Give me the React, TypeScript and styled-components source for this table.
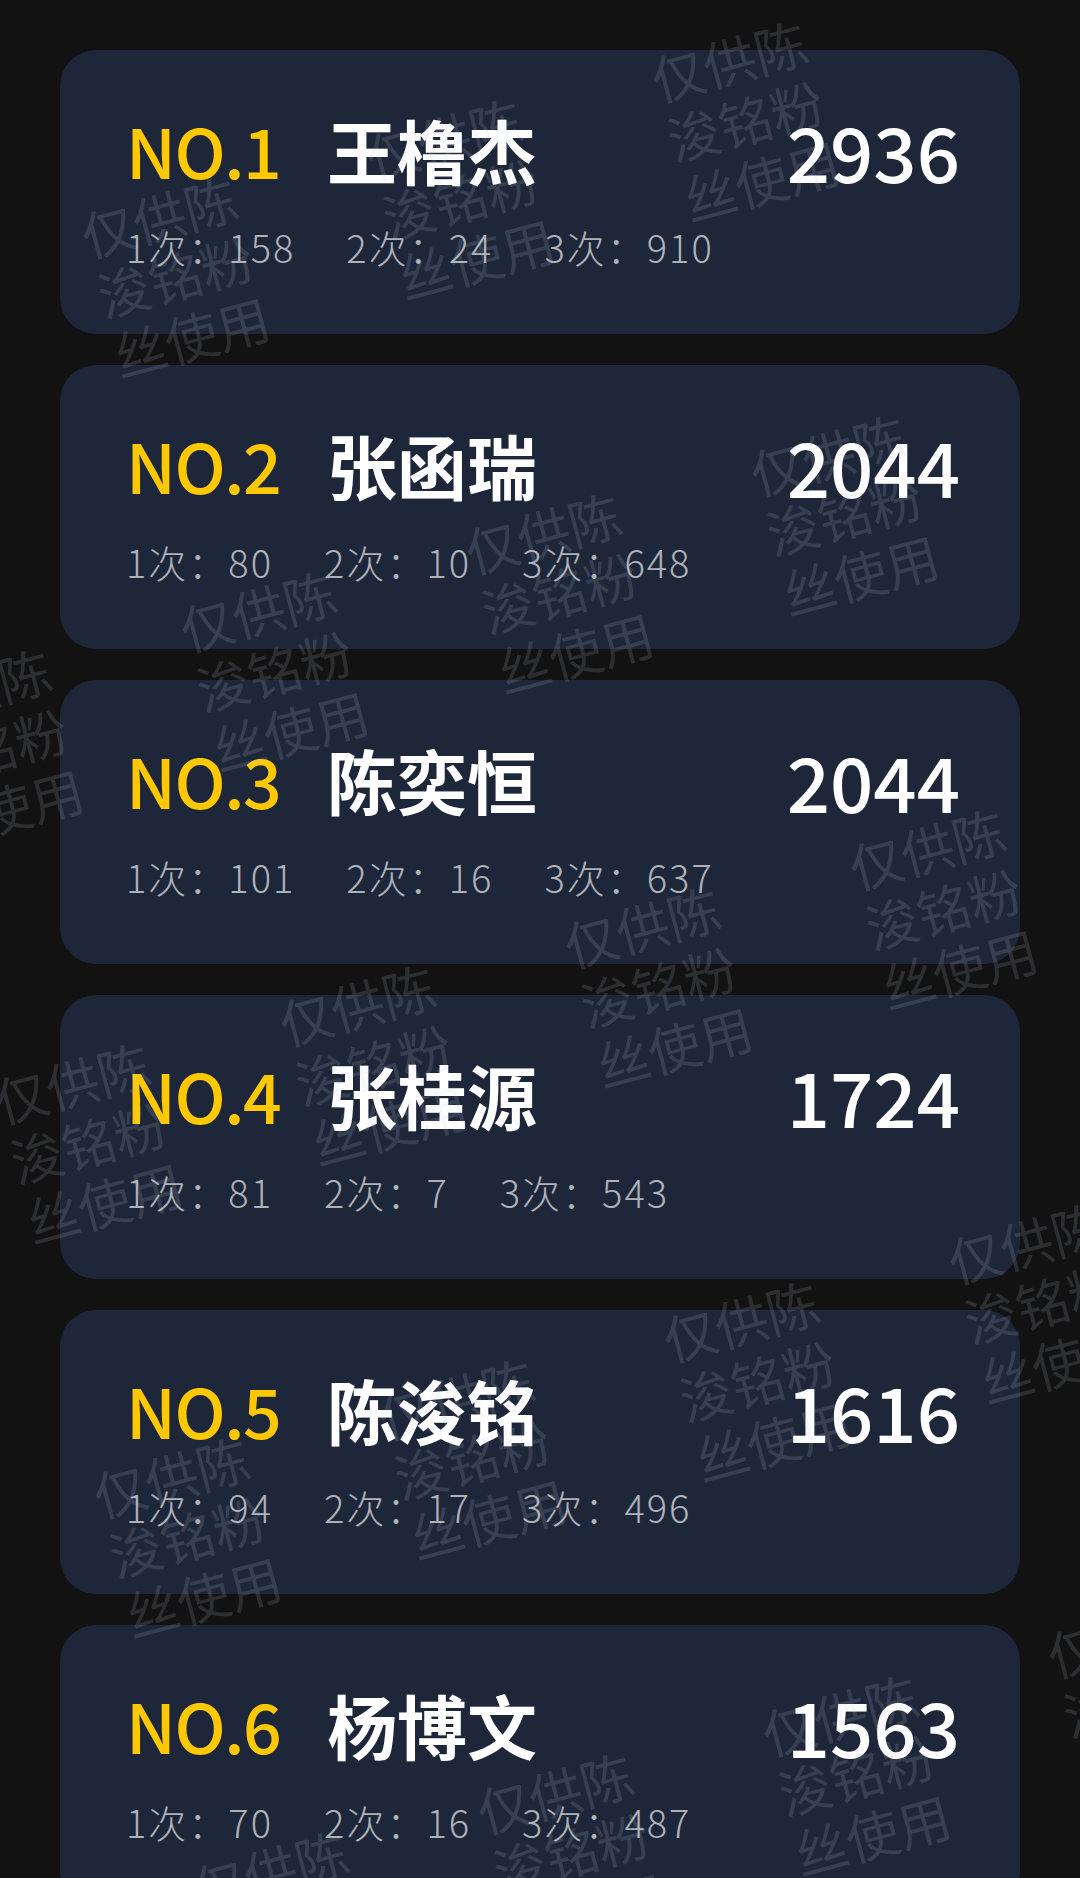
import styled, { createGlobalStyle } from 'styled-components'

const GlobalStyle = createGlobalStyle`
  html, body {
    margin: 0;
    padding: 0;
    background: #121212;
    overflow: hidden;
  }
  body {
    font-family: 'Noto Sans CJK SC', 'Noto Sans', sans-serif;
  }
`

const Page = styled.div`
  position: relative;
  min-height: 1878px;
  padding: 50px 60px 0;
  box-sizing: border-box;
  display: flex;
  flex-direction: column;
  gap: 31px;
`

const Card = styled.div`
  height: 284px;
  box-sizing: border-box;
  background: #1e2739;
  border-radius: 36px;
  padding: 60px 60px 0 66px;
  display: flex;
  flex-direction: column;
`

const TopRow = styled.div`
  display: flex;
  align-items: center;
  height: 80px;
`

const Rank = styled.span`
  width: 201px;
  flex-shrink: 0;
  color: #ffc800;
  font-size: 68px;
  font-weight: 500;
  letter-spacing: -1.5px;
  line-height: 1;
`

const Name = styled.span`
  color: #ffffff;
  font-size: 70px;
  font-weight: 700;
  line-height: 1;
`

const Score = styled.span`
  margin-left: auto;
  color: #ffffff;
  font-size: 76px;
  font-weight: 500;
  line-height: 1;
`

const Stats = styled.div`
  display: flex;
  gap: 51px;
  margin-top: 38px;
`

const Stat = styled.span`
  color: #aeb1b8;
  font-size: 38px;
  font-weight: 300;
  letter-spacing: 2px;
  line-height: 1;
`

const WatermarkLayer = styled.div`
  position: absolute;
  inset: 0;
  overflow: hidden;
  pointer-events: none;
`

const Mark = styled.div`
  position: absolute;
  font-size: 53px;
  line-height: 62px;
  color: rgba(200, 210, 230, 0.15);
  transform: rotate(-15deg);
  transform-origin: 0 0;
  white-space: pre;
`

const players = [
  { name: '王橹杰', score: 2936, hits: [158, 24, 910] },
  { name: '张函瑞', score: 2044, hits: [80, 10, 648] },
  { name: '陈奕恒', score: 2044, hits: [101, 16, 637] },
  { name: '张桂源', score: 1724, hits: [81, 7, 543] },
  { name: '陈浚铭', score: 1616, hits: [94, 17, 496] },
  { name: '杨博文', score: 1563, hits: [70, 16, 487] },
]

// watermark lattice, only the tiles that show up in the shot
const tiles: [number, number][] = [
  [-1, -1], [0, -1], [1, -1],
  [-2, 0], [-1, 0], [0, 0], [1, 0],
  [-2, 1], [-1, 1], [0, 1], [1, 1],
  [-2, 2], [-1, 2], [0, 2], [1, 2],
  [-2, 3], [-1, 3], [0, 3], [1, 3],
]

export default function App() {
  return (
    <>
      <GlobalStyle />
      <Page>
        {players.map((p, i) => (
          <Card key={p.name}>
            <TopRow>
              <Rank>NO.{i + 1}</Rank>
              <Name>{p.name}</Name>
              <Score>{p.score}</Score>
            </TopRow>
            <Stats>
              {p.hits.map((h, k) => (
                <Stat key={k}>
                  {k + 1}次：{h}
                </Stat>
              ))}
            </Stats>
          </Card>
        ))}
        <WatermarkLayer>
          {tiles.map(([i, j]) => (
            <Mark key={`${i}-${j}`} style={{ left: 458 + 285 * i + 99 * j, top: 522 - 78 * i + 394 * j }}>
              {'仅供陈\n浚铭粉\n丝使用'}
            </Mark>
          ))}
        </WatermarkLayer>
      </Page>
    </>
  )
}
